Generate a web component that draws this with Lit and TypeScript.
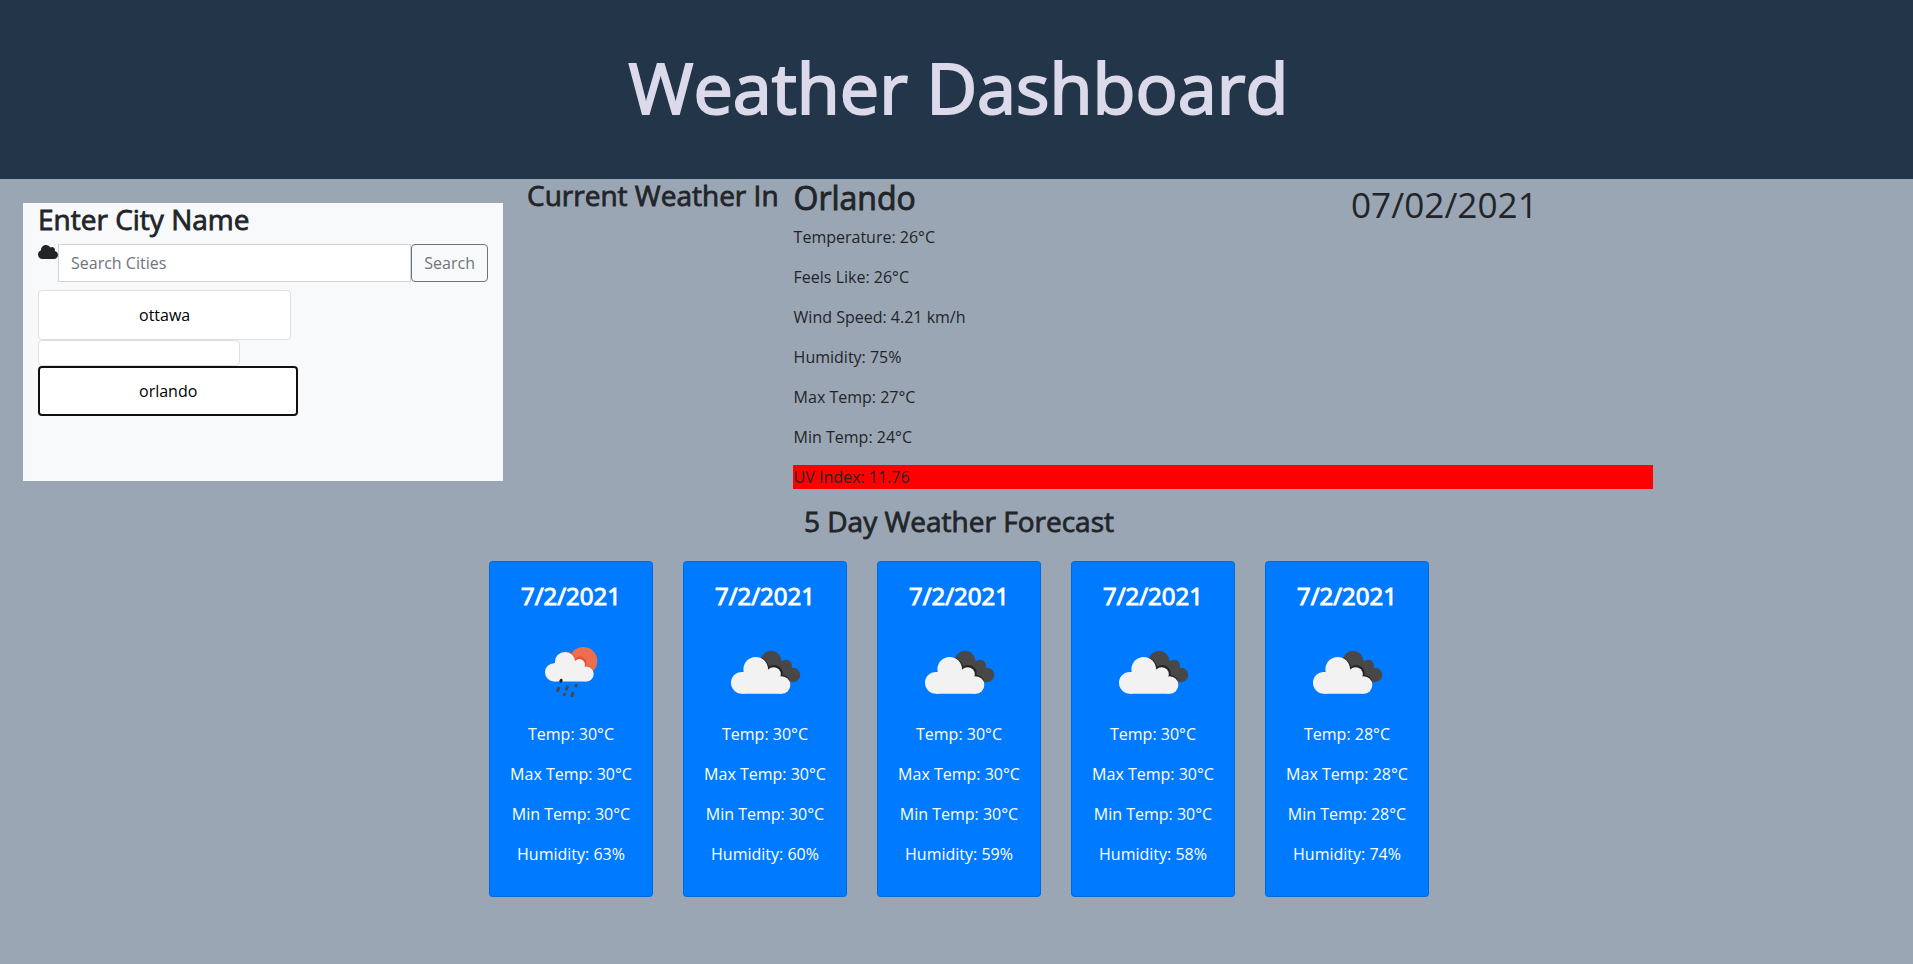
import { LitElement, html, css, svg } from "lit";
import { customElement, property } from "lit/decorators.js";

const rainIcon = svg`
  <circle cx="62.3" cy="39" r="14" fill="#ec6e4c"/>
  <g fill="#e4512f">
    <path d="M44 29.3a10.6 10.6 0 0 1 10 7.6a6.6 6.6 0 0 1 11 6.8a7.6 7.6 0 0 1 6.5 3.6l-3 4H44z"/>
  </g>
  <g fill="#f2f2f2">
    <circle cx="33.1" cy="50.3" r="9.1"/><circle cx="44" cy="40" r="10.1"/><circle cx="58.3" cy="42.7" r="5.7"/>
    <circle cx="65.3" cy="52" r="7.4"/><path d="M33 41.2h6l19-2 6 8 1.3 12.2H33z"/>
  </g>
  <g stroke="#484848" stroke-width="3" stroke-linecap="round">
    <path d="M40.2 58.4l-.4.8" stroke="#222"/><path d="M37.6 66.2l-.9 2.4"/><path d="M46.3 64.9l-.9 2.4"/>
    <path d="M55.2 63.4l-.3.6"/><path d="M51.9 71.2l-.9 2.4"/><path d="M43.5 72.2l-.2.4"/>
  </g>`;

const cloudsIcon = svg`
  <g fill="#484848">
    <circle cx="56" cy="39.1" r="10.3"/><circle cx="71" cy="43.8" r="6"/><circle cx="78.2" cy="52.9" r="7.1"/>
    <path d="M56 39l10-1 10 8 2.2 14H62z"/>
  </g>
  <g fill="#242424">
    <path d="M46 35.6a13.5 13.5 0 0 1 8 9.2a8.6 8.6 0 0 1 13.6 8.3a10 10 0 0 1 7.2 4.9l-6 3L50 60z"/>
  </g>
  <g fill="#f2f2f2">
    <circle cx="26.9" cy="60.8" r="10.9"/><circle cx="40.7" cy="47.3" r="12.3"/><circle cx="58.6" cy="52.4" r="7.2"/>
    <circle cx="66.6" cy="63" r="8.7"/><path d="M26.9 49.9h8l22-2 8 8 1.7 15.8H26.9z"/>
  </g>`;

@customElement("forecast-card")
class ForecastCard extends LitElement {
  @property() temp = "";
  @property() humidity = "";
  @property() icon = "";

  static styles = css`
    :host { display: block; box-sizing: border-box; width: 164px; height: 336px; padding: 20px 0 0; text-align: center;
      background: #007bff; color: #fff; border: 1px solid rgba(0, 0, 0, .125); border-radius: 4px; }
    .date { margin: 0 0 11px; font-size: 24px; line-height: 28.8px; font-weight: 400; -webkit-text-stroke: 1px #fff; }
    .icon { display: block; width: 100px; height: 100px; margin: 0 auto; }
    .line { margin: 0 0 16px; }
  `;

  render() {
    return html`
      <h4 class="date">7/2/2021</h4>
      <svg class="icon" viewBox="0 0 100 100">${this.icon === "rain" ? rainIcon : cloudsIcon}</svg>
      <p class="line">Temp: ${this.temp}°C</p>
      <p class="line">Max Temp: ${this.temp}°C</p>
      <p class="line">Min Temp: ${this.temp}°C</p>
      <p class="line">Humidity: ${this.humidity}%</p>
    `;
  }
}

@customElement("app-root")
class AppRoot extends LitElement {
  static styles = css`
    :host { display: block; min-height: 964px; background: #9ba6b4; color: #212529;
      font: 400 16px/24px "Open Sans", sans-serif; }
    * { box-sizing: border-box; }
    h1, h2, h3, p { margin: 0; font-weight: 400; }
    .banner { height: 179px; padding: 44px 0 0 4px; background: #233549; text-align: center; }
    .title { font-size: 70.2px; line-height: 86.4px; color: #dcdaea; -webkit-text-stroke: 2px #dcdaea; }
    .main { display: flex; height: 326px; }
    .search { width: 480px; height: 278px; margin: 24px 0 0 23px; padding: 0 15px; background: #f8f9fa; }
    .heading { font-size: 28px; line-height: 33.6px; -webkit-text-stroke: .8px #212529; }
    .form { display: flex; margin-top: 7.4px; }
    .cloud { width: 20px; height: 16px; }
    .input { flex: 1; min-width: 0; height: 38px; padding: 6px 12px; border: 1px solid #ced4da; background: #fff;
      font: inherit; }
    .input::placeholder { color: #6c757d; opacity: 1; }
    .button { height: 38px; padding: 6px 12px; border: 1px solid #6c757d; border-radius: 4px; background: transparent;
      color: #6c757d; font: inherit; }
    .history { display: flex; flex-direction: column; align-items: flex-start; margin-top: 8px; }
    .city { padding: 12px 100px; border: 1px solid #dfdfdf; border-radius: 4px; background: #fff; color: #000; font: inherit; }
    .active { padding: 11px 99px; border: 2px solid #101010; }
    .label { width: 290px; padding-left: 24px; }
    .details { width: 860px; }
    .top { display: flex; height: 46.4px; }
    .place { width: 558px; padding-left: .5px; font-size: 32px; line-height: 38.4px; -webkit-text-stroke: .9px #212529; }
    .date { font-size: 35.2px; line-height: 51px; white-space: nowrap; }
    .line { margin-bottom: 16px; padding-left: .6px; }
    .uv { background: red; }
    .forecast-title { text-align: center; margin-left: 5px; }
    .cards { display: flex; gap: 30px; margin: 22.4px 0 0 489px; }
  `;

  render() {
    return html`
      <header class="banner"><h1 class="title">Weather Dashboard</h1></header>
      <section class="main">
        <aside class="search">
          <h3 class="heading">Enter City Name</h3>
          <div class="form">
            <svg class="cloud" viewBox="0 0 640 512"><path fill="#212529" d="M537.6 226.600c4.100-10.700 6.400-22.400 6.400-34.600 0-53-43-96-96-96-19.700 0-38.100 6-53.300 16.200C367 64.200 315.300 32 256 32c-88.400 0-160 71.600-160 160 0 2.700.1 5.400.2 8.100C40.200 219.800 0 273.200 0 336c0 79.500 64.500 144 144 144h368c70.700 0 128-57.300 128-128 0-61.900-44-113.600-102.400-125.400z"/></svg>
            <input class="input" placeholder="Search Cities">
            <button class="button">Search</button>
          </div>
          <div class="history">
            <button class="city">ottawa</button>
            <button class="city"></button>
            <button class="city active">orlando</button>
          </div>
        </aside>
        <div class="label"><h3 class="heading">Current Weather In</h3></div>
        <div class="details">
          <div class="top"><h2 class="place">Orlando</h2><p class="date">07/02/2021</p></div>
          <p class="line">Temperature: 26°C</p>
          <p class="line">Feels Like: 26°C</p>
          <p class="line">Wind Speed: 4.21 km/h</p>
          <p class="line">Humidity: 75%</p>
          <p class="line">Max Temp: 27°C</p>
          <p class="line">Min Temp: 24°C</p>
          <p class="line uv">UV Index: 11.76</p>
        </div>
      </section>
      <section>
        <h3 class="heading forecast-title">5 Day Weather Forecast</h3>
        <div class="cards">
          <forecast-card icon="rain" temp="30" humidity="63"></forecast-card>
          <forecast-card temp="30" humidity="60"></forecast-card>
          <forecast-card temp="30" humidity="59"></forecast-card>
          <forecast-card temp="30" humidity="58"></forecast-card>
          <forecast-card temp="28" humidity="74"></forecast-card>
        </div>
      </section>
    `;
  }
}
